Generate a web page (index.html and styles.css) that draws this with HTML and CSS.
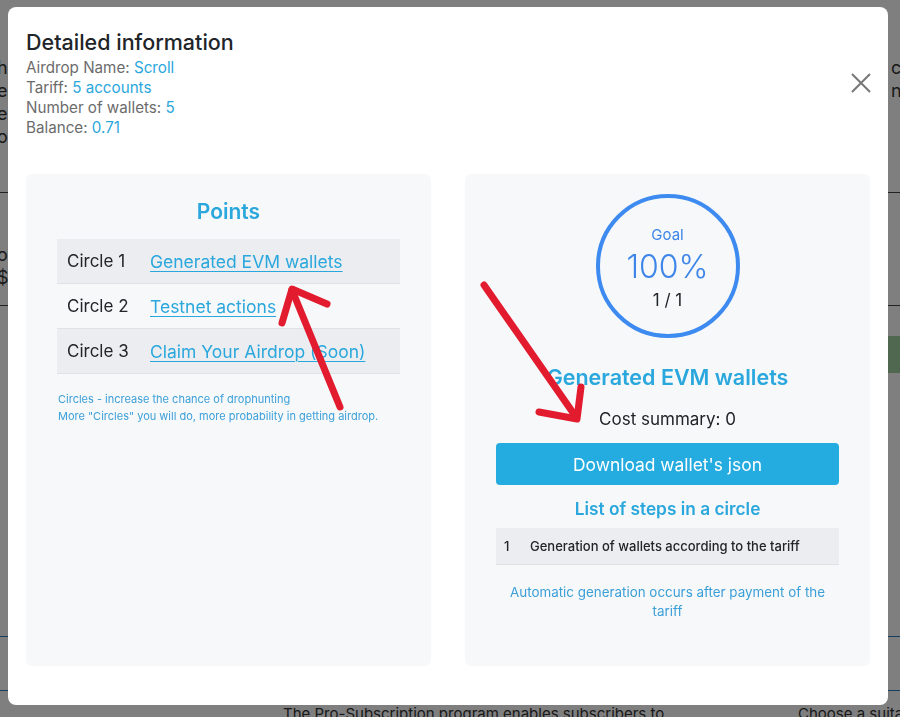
FILE: index.html
```html
<!DOCTYPE html>
<html lang="en">
<head>
<meta charset="utf-8">
<title>Detailed information</title>
<link rel="stylesheet" href="styles.css">
</head>
<body>
<div class="page">
  <div class="page-top">
    <div class="frag-col">
      <span>h</span><span>e</span><span>er</span><span>o</span>
    </div>
    <div class="frag-col frag-right">
      <span>co</span><span>ns</span>
    </div>
  </div>
  <div class="page-rule"></div>
  <div class="page-mid">
    <div class="frag-col"><span>ol</span><span>$</span></div>
  </div>
  <div class="page-rule"></div>
  <div class="page-green"></div>
  <div class="page-blue first"></div>
  <div class="page-blue second"></div>
  <div class="page-bottom">
    <span class="pb-left">The Pro-Subscription program enables subscribers to</span>
    <span class="pb-right">Choose a suitable</span>
  </div>
</div>
<div class="backdrop"></div>

<div class="modal">
  <div class="modal-header">
    <div class="info">
      <h2 class="title">Detailed information</h2>
      <div class="line">Airdrop Name: <span class="val">Scroll</span></div>
      <div class="line">Tariff: <span class="val">5 accounts</span></div>
      <div class="line">Number of wallets: <span class="val">5</span></div>
      <div class="line">Balance: <span class="val">0.71</span></div>
    </div>
    <button class="close" aria-label="Close">
      <svg width="20" height="20" viewBox="0 0 20 20"><path d="M1 1L19 19M19 1L1 19" stroke="#777" stroke-width="2" fill="none"/></svg>
    </button>
  </div>
  <div class="modal-body">
    <section class="panel">
      <h3 class="panel-title points-title">Points</h3>
      <div class="points">
        <div class="row striped"><span class="c1">Circle 1</span><a class="link" href="#">Generated EVM wallets</a></div>
        <div class="row"><span class="c1">Circle 2</span><a class="link" href="#">Testnet actions</a></div>
        <div class="row striped"><span class="c1">Circle 3</span><a class="link" href="#">Claim Your Airdrop (Soon)</a></div>
      </div>
      <p class="hint">Circles - increase the chance of drophunting<br>More "Circles" you will do, more probability in getting airdrop.</p>
    </section>
    <section class="panel panel-right">
      <div class="goal">
        <span class="goal-label">Goal</span>
        <span class="goal-pct">100%</span>
        <span class="goal-count">1 / 1</span>
      </div>
      <h3 class="panel-title wallets-title">Generated EVM wallets</h3>
      <div class="cost">Cost summary: 0</div>
      <button class="download">Download wallet's json</button>
      <h4 class="steps-title">List of steps in a circle</h4>
      <div class="steps">
        <div class="step"><span class="s1">1</span><span>Generation of wallets according to the tariff</span></div>
      </div>
      <p class="auto">Automatic generation occurs after payment of the tariff</p>
    </section>
  </div>
</div>

<svg class="annotations" width="900" height="717" viewBox="0 0 900 717">
  <g stroke="#e21b2e" stroke-width="7" stroke-linecap="round" stroke-linejoin="round" fill="none">
    <path d="M340 407L292 290"/>
    <path d="M282 323L292 289L327 304"/>
    <path d="M484 285L576 417"/>
    <path d="M581 387L577 419L539 412"/>
  </g>
</svg>
</body>
</html>
```

FILE: styles.css
```css
* { box-sizing: border-box; }
html, body { margin: 0; padding: 0; }
body {
  width: 900px;
  height: 717px;
  overflow: hidden;
  font-family: Inter, "Noto Sans", "Liberation Sans", sans-serif;
  background: #ffffff;
  color: #212529;
}

/* background page (behind the modal) */
.page {
  height: 717px;
  display: flex;
  flex-direction: column;
  color: #333;
  font-size: 18px;
}
.page-top {
  height: 192px;
  flex: none;
  display: flex;
  justify-content: space-between;
  padding-top: 56px;
}
.frag-col {
  display: flex;
  flex-direction: column;
  line-height: 23px;
  margin-left: -3px;
}
.frag-right { margin-left: 0; margin-right: -12px; }
.page-rule { height: 1px; flex: none; background: #444; }
.page-mid { height: 112px; flex: none; padding-top: 50px; }
.page-green {
  flex: none;
  height: 37px;
  margin-top: 30px;
  margin-left: 888px;
  background: #9fd19f;
}
.page-blue { flex: none; height: 1px; background: #2a7fc0; }
.page-blue.first { margin-top: 263px; }
.page-blue.second { margin-top: 53px; }
.page-bottom {
  margin-top: auto;
  height: 12px;
  flex: none;
  display: grid;
  grid-template-columns: 283px 515px 1fr;
  font-size: 15px;
  line-height: 18px;
  white-space: nowrap;
}
.pb-left { grid-column: 2; }
.pb-right { grid-column: 3; }

.backdrop {
  position: fixed;
  inset: 0;
  background: rgba(0, 0, 0, 0.5);
}

/* modal */
.modal {
  position: fixed;
  left: 8px;
  top: 7px;
  width: 880px;
  height: 698px;
  background: #ffffff;
  border-radius: 8px;
  display: flex;
  flex-direction: column;
}
.modal-header {
  display: flex;
  justify-content: space-between;
  align-items: center;
  padding: 22px 17px 0 18px;
}
.title {
  margin: 0 0 3px;
  font-size: 21.5px;
  line-height: 26px;
  font-weight: 500;
  color: #212529;
}
.line {
  font-size: 15.2px;
  line-height: 20px;
  color: #6c6c6c;
}
.val { color: #2aa7dc; }
.close {
  border: 0;
  background: transparent;
  padding: 0;
  width: 20px;
  height: 20px;
  margin-top: -2px;
  cursor: pointer;
}
.close svg { display: block; }

.modal-body {
  flex: 1;
  display: flex;
  gap: 34px;
  padding: 36px 18px 39px;
}
.panel {
  flex: 1;
  background: #f6f8fa;
  border-radius: 6px;
  padding: 20px 31px 0;
  display: flex;
  flex-direction: column;
  align-items: stretch;
}
.panel-title {
  margin: 0;
  text-align: center;
  font-size: 21px;
  line-height: 25px;
  font-weight: 600;
  color: #2aa7dc;
}
.points-title { margin-top: 5px; margin-bottom: 15px; }
.points { display: flex; flex-direction: column; }
.row {
  display: grid;
  grid-template-columns: 83px 1fr;
  align-items: center;
  height: 45px;
  padding-left: 10px;
  border-bottom: 1px solid #dfe2e6;
  font-size: 17px;
}
.row.striped { background: #ebedf0; }
.c1 { color: #212529; }
.link {
  color: #2aa7dc;
  font-size: 17.5px;
  text-decoration: underline;
  text-underline-offset: 3px;
  text-decoration-thickness: 1px;
}
.hint {
  margin: 17px 0 0 1px;
  font-size: 11px;
  line-height: 17px;
  color: #3b9fd8;
}

/* right panel */
.goal {
  align-self: center;
  width: 144px;
  height: 144px;
  border: 4px solid #3d8bf0;
  border-radius: 50%;
  display: flex;
  flex-direction: column;
  align-items: center;
  justify-content: center;
  padding-top: 4px;
}
.goal-label { font-size: 15px; line-height: 20px; color: #3d85e8; }
.goal-pct { font-size: 32px; line-height: 44px; font-weight: 300; color: #3d85e8; }
.goal-count { font-size: 17px; line-height: 22px; color: #212529; }
.wallets-title { margin-top: 27px; font-size: 21.5px; }
.cost {
  margin-top: 18px;
  text-align: center;
  font-size: 17px;
  line-height: 22px;
  color: #212529;
}
.download {
  margin-top: 13px;
  height: 42px;
  border: 0;
  border-radius: 4px;
  background: #24abdf;
  color: #ffffff;
  font-family: inherit;
  font-size: 17.4px;
}
.steps-title {
  margin: 13px 0 0;
  text-align: center;
  font-size: 17.3px;
  line-height: 22px;
  font-weight: 600;
  color: #2aa7dc;
}
.steps { margin-top: 8px; }
.step {
  display: grid;
  grid-template-columns: 26px 1fr;
  align-items: center;
  height: 37px;
  padding-left: 8px;
  background: #ebedf0;
  border-bottom: 1px solid #dfe2e6;
  font-size: 13px;
  font-weight: 500;
  color: #212529;
}
.auto {
  margin: 18px 0 0;
  padding: 0 6px;
  text-align: center;
  font-size: 13.4px;
  line-height: 19px;
  color: #3b9fd8;
}

.annotations {
  position: fixed;
  left: 0;
  top: 0;
  pointer-events: none;
}
```
